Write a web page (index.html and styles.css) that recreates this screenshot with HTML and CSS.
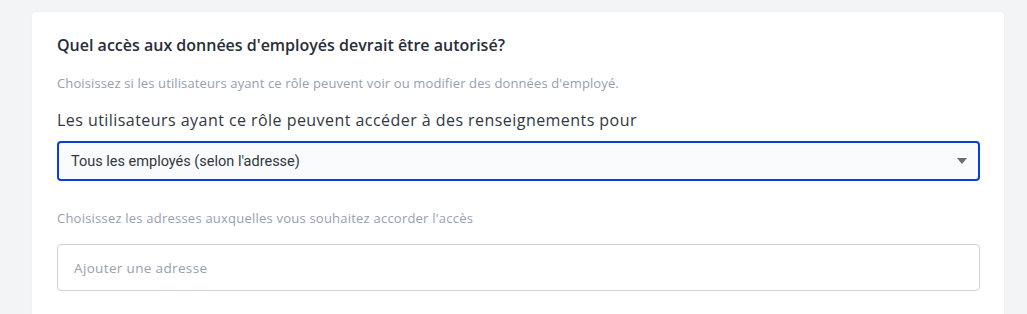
FILE: index.html
```html
<!DOCTYPE html>
<html lang="fr">

<head>
    <meta charset="UTF-8">
    <meta name="viewport" content="width=device-width, initial-scale=1.0">
    <title>Accès aux données</title>
    <link rel="stylesheet" href="styles.css">
</head>

<body>
    <section class="card">
        <h2 class="title">Quel accès aux données d'employés devrait être autorisé?</h2>
        <p class="hint">Choisissez si les utilisateurs ayant ce rôle peuvent voir ou modifier des données d'employé.</p>

        <label class="label" for="scope">Les utilisateurs ayant ce rôle peuvent accéder à des renseignements pour</label>
        <div class="select" id="scope">
            <span>Tous les employés (selon l'adresse)</span>
            <span class="arrow"></span>
        </div>

        <p class="hint hint-addr">Choisissez les adresses auxquelles vous souhaitez accorder l'accès</p>
        <input type="text" class="address" placeholder="Ajouter une adresse">
    </section>
</body>

</html>
```

FILE: styles.css
```css
body {
    margin: 0px;
    background-color: rgb(243, 244, 246);
    font-family: "Open Sans", sans-serif;
    color: rgb(31, 41, 55);
}

.card {
    margin: 12px 23px 0px 32px;
    padding: 22px 24px 30px 25px;
    background-color: white;
    border-radius: 4px;
    box-shadow: 0px 0px 2px rgba(0, 0, 0, 0.04);
}

.title {
    margin: 0px;
    font-size: 16px;
    font-weight: 600;
    line-height: 22px;
    color: rgb(40, 45, 55);
}

.hint {
    margin: 18px 0px 0px 0px;
    font-size: 13px;
    line-height: 18px;
    letter-spacing: 0.12px;
    color: rgb(150, 160, 175);
}

.label {
    display: block;
    margin-top: 17px;
    font-size: 16px;
    line-height: 22px;
    letter-spacing: 0.45px;
    color: rgb(50, 56, 66);
}

.select {
    display: flex;
    align-items: center;
    justify-content: space-between;
    margin-top: 10px;
    height: 36px;
    padding: 0px 11px 0px 12px;
    border: 2px solid rgb(12, 62, 212);
    border-radius: 4px;
    background-color: rgb(250, 251, 252);
    font-family: Roboto, "Liberation Sans", sans-serif;
    font-size: 14.5px;
    color: rgb(50, 55, 62);
}

.arrow {
    width: 0px;
    height: 0px;
    border-left: 5px solid transparent;
    border-right: 5px solid transparent;
    border-top: 6px solid rgb(100, 110, 125);
}

.hint-addr {
    margin-top: 28px;
    letter-spacing: 0.22px;
}

.address {
    display: block;
    box-sizing: border-box;
    width: 100%;
    height: 47px;
    margin-top: 17px;
    padding: 0px 16px;
    border: 1px solid rgb(205, 210, 214);
    border-radius: 4px;
    font-family: "Open Sans", sans-serif;
    font-size: 13.5px;
    letter-spacing: 0.35px;
    outline: none;
}

.address::placeholder {
    color: rgb(150, 160, 175);
}
```
